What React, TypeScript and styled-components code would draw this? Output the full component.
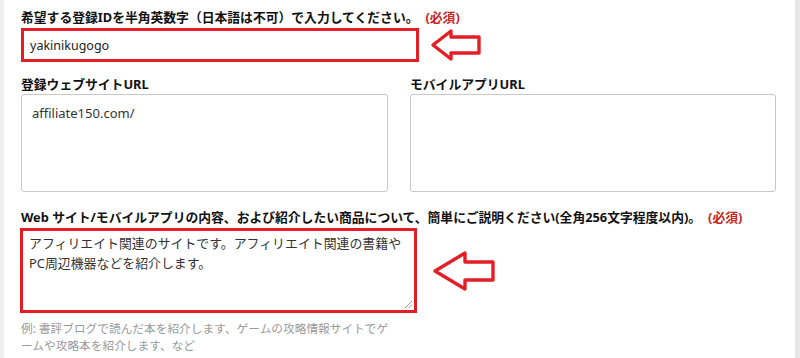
import React from 'react'
import styled, { createGlobalStyle } from 'styled-components'

const Global = createGlobalStyle`
  html, body {
    margin: 0;
    padding: 0;
    background: #fff;
  }
  body {
    font-family: "Noto Sans", "Noto Sans CJK JP", sans-serif;
    color: #111;
  }
`

const Arrow = ({ w, h, points, ml }: { w: number; h: number; points: string; ml: number }) => (
  <ArrowSvg width={w} height={h} viewBox={`0 0 ${w} ${h}`} $ml={ml}>
    <polygon points={points} fill="#fff" stroke="#e51d25" strokeWidth={3.4} strokeLinejoin="round" />
  </ArrowSvg>
)

const App = () => {
  return (
    <Page>
      <Global />
      <LeftStrip />
      <Form>
        <Label>
          希望する登録IDを半角英数字（日本語は不可）で入力してください。<Required>(必須)</Required>
        </Label>
        <Row>
          <RedInput>yakinikugogo</RedInput>
          <Arrow w={52} h={34} ml={11} points="3,17 21,3 21,9 49,9 49,25 21,25 21,31" />
        </Row>

        <Columns>
          <Field>
            <Label>登録ウェブサイトURL</Label>
            <TextBox>affiliate150.com/</TextBox>
          </Field>
          <Field>
            <Label>モバイルアプリURL</Label>
            <TextBox />
          </Field>
        </Columns>

        <Label $top={16}>
          Web サイト/モバイルアプリの内容、および紹介したい商品について、簡単にご説明ください(全角256文字程度以内)。<Required>(必須)</Required>
        </Label>
        <Row>
          <RedArea>
            アフィリエイト関連のサイトです。アフィリエイト関連の書籍や
            <br />
            PC周辺機器などを紹介します。
            <Grip width="7" height="7" viewBox="0 0 7 7">
              <line x1="7" y1="0" x2="0" y2="7" stroke="#999" strokeWidth="1" />
              <line x1="7" y1="3.5" x2="3.5" y2="7" stroke="#999" strokeWidth="1" />
            </Grip>
          </RedArea>
          <Arrow w={64} h={42} ml={15} points="3,21 33,3 33,12 61,12 61,30 33,30 33,39" />
        </Row>
        <Hint>
          例: 書評ブログで読んだ本を紹介します、ゲームの攻略情報サイトでゲ
          <br />
          ームや攻略本を紹介します、など
        </Hint>
      </Form>
      <RightStrip />
    </Page>
  )
}

export default App

const Page = styled.div`
  width: 800px;
  height: 358px;
  display: flex;
  overflow: hidden;
  background: #fff;
`
const LeftStrip = styled.div`
  width: 4px;
  background: #eeeeee;
  flex-shrink: 0;
`
const RightStrip = styled.div`
  width: 5px;
  margin-left: auto;
  background: #e6e6e6;
  flex-shrink: 0;
`
const Form = styled.div`
  display: flex;
  flex-direction: column;
  padding: 8px 0 0 17px;
  width: 755px;
`
const Label = styled.div<{ $top?: number }>`
  font-size: 12.8px;
  font-weight: 700;
  line-height: 19px;
  color: #111;
  margin-top: ${(p) => p.$top ?? 0}px;
  white-space: nowrap;
`
const Required = styled.span`
  color: #c7251f;
  margin-left: 7px;
`
const Row = styled.div`
  display: flex;
  align-items: center;
  margin-top: 1px;
`
const ArrowSvg = styled.svg<{ $ml: number }>`
  margin-left: ${(p) => p.$ml}px;
  flex-shrink: 0;
`
const RedInput = styled.div`
  box-sizing: border-box;
  width: 398px;
  height: 34px;
  border: 3px solid #e51d25;
  padding: 0 6px;
  display: flex;
  align-items: center;
  font-size: 12.5px;
  color: #222;
`
const Columns = styled.div`
  display: grid;
  grid-template-columns: 367px 366px;
  column-gap: 22px;
  margin-top: 13px;
`
const Field = styled.div`
  display: flex;
  flex-direction: column;
`
const TextBox = styled.div`
  box-sizing: border-box;
  height: 98px;
  border: 1px solid #c8c8c8;
  border-radius: 3px;
  padding: 8px 10px;
  font-size: 13px;
  line-height: 20px;
  color: #333;
`
const RedArea = styled.div`
  position: relative;
  box-sizing: border-box;
  width: 397px;
  height: 85px;
  margin-left: -1px;
  border: 3px solid #e51d25;
  padding: 2px 6px;
  font-size: 12.9px;
  line-height: 20px;
  color: #333;
  white-space: nowrap;
`
const Grip = styled.svg`
  position: absolute;
  right: 2px;
  bottom: 2px;
`
const Hint = styled.div`
  margin-top: 7px;
  font-size: 11.7px;
  line-height: 17px;
  color: #999;
  white-space: nowrap;
`
